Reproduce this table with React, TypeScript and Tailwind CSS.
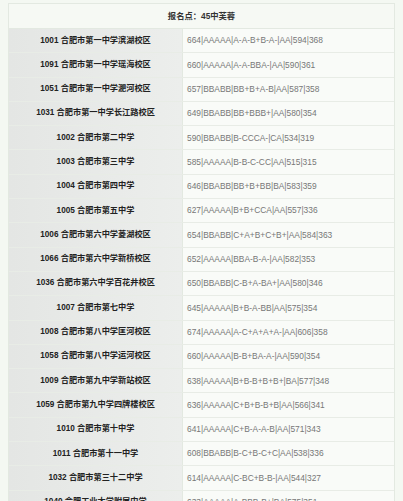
const rows: [string, string][] = [
  ['1001 合肥市第一中学滨湖校区', '664|AAAAA|A-A-B+B-A-|AA|594|368'],
  ['1091 合肥市第一中学瑶海校区', '660|AAAAA|A-A-BBA-|AA|590|361'],
  ['1051 合肥市第一中学淝河校区', '657|BBABB|BB+B+A-B|AA|587|358'],
  ['1031 合肥市第一中学长江路校区', '649|BBABB|BB+BBB+|AA|580|354'],
  ['1002 合肥市第二中学', '590|BBABB|B-CCCA-|CA|534|319'],
  ['1003 合肥市第三中学', '585|AAAAA|B-B-C-CC|AA|515|315'],
  ['1004 合肥市第四中学', '646|BBABB|BB+B+BB|BA|583|359'],
  ['1005 合肥市第五中学', '627|AAAAA|B+B+CCA|AA|557|336'],
  ['1006 合肥市第六中学菱湖校区', '654|BBABB|C+A+B+C+B+|AA|584|363'],
  ['1066 合肥市第六中学新桥校区', '652|AAAAA|BBA-B-A-|AA|582|353'],
  ['1036 合肥市第六中学百花井校区', '650|BBABB|C-B+A-BA+|AA|580|346'],
  ['1007 合肥市第七中学', '645|AAAAA|B+B-A-BB|AA|575|354'],
  ['1008 合肥市第八中学匡河校区', '674|AAAAA|A-C+A+A+A-|AA|606|358'],
  ['1058 合肥市第八中学运河校区', '660|AAAAA|B-B+BA-A-|AA|590|354'],
  ['1009 合肥市第九中学新站校区', '638|AAAAA|B+B-B+B+B+|BA|577|348'],
  ['1059 合肥市第九中学四牌楼校区', '636|AAAAA|C+B+B-B+B|AA|566|341'],
  ['1010 合肥市第十中学', '641|AAAAA|C+B-A-A-B|AA|571|343'],
  ['1011 合肥市第十一中学', '608|BBABB|B-C+B-C+C|AA|538|336'],
  ['1032 合肥市第三十二中学', '614|AAAAA|C-BC+B-B-|AA|544|327'],
  ['1040 合肥工业大学附属中学', '633|AAAAA|A-BBB-B+|BA|575|351'],
];

export default function App() {
  return (
    <div
      className="h-[501px] w-[403px] overflow-hidden bg-[#f4f8f2] pl-2 pr-2 pt-[3px]"
      style={{ fontFamily: '"Liberation Sans", Arial, "Noto Sans CJK SC", sans-serif' }}
    >
      <div className="border border-[#e3e9e1] bg-[#f6f9f4]">
        <div className="flex h-[25px] items-center justify-center border-b border-[#e3e9e1] text-[8.3px] font-bold text-[#333]">
          报名点：45中芙蓉
        </div>
        {rows.map(([name, score]) => (
          <div key={name} className="flex h-[24.3px] border-b border-[#e8ece6]">
            <div className="flex w-[173px] shrink-0 items-center justify-center whitespace-nowrap bg-gradient-to-r from-[#e4e6e4] to-[#eceeec] text-[8.2px] font-bold text-[#222]">
              {name}
            </div>
            <div className="flex flex-1 items-center whitespace-nowrap border-l border-[#e3e9e1] bg-[#f9fbf8] pl-[4px] text-[8.4px] text-[#777]">
              {score}
            </div>
          </div>
        ))}
      </div>
    </div>
  );
}
